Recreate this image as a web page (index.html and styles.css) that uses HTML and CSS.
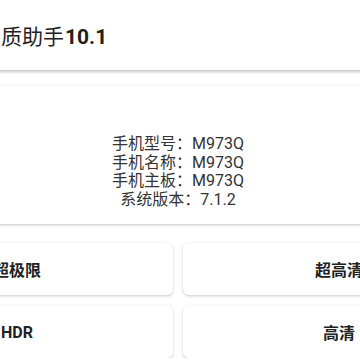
FILE: index.html
```html
<!DOCTYPE html>
<html lang="zh-CN">
<head>
  <meta charset="UTF-8">
  <meta name="viewport" content="width=device-width, initial-scale=1.0">
  <title>画质助手</title>
  <link rel="stylesheet" href="styles.css">
</head>
<body>
  <div class="screen">
    <div class="toolbar">
      <div class="title">画质助手<span class="version">10.1</span></div>
    </div>

    <div class="content">
      <div class="infoCard">
        <div class="infoLine">手机型号：M973Q</div>
        <div class="infoLine">手机名称：M973Q</div>
        <div class="infoLine">手机主板：M973Q</div>
        <div class="infoLine">系统版本：7.1.2</div>
      </div>

      <div class="modeGrid">
        <div class="modeBtn">超极限</div>
        <div class="modeBtn">超高清</div>
        <div class="modeBtn">HDR</div>
        <div class="modeBtn">高清</div>
      </div>
    </div>
  </div>
</body>
</html>
```

FILE: styles.css
```css
body{margin: 0; background: #fff; overflow: hidden; font-family: Roboto, "Noto Sans CJK SC", sans-serif;}

/* the screen is wider than the shot, so it is pulled left */
.screen{width: 650px; margin-left: -147px;}

.toolbar{
  height: 70px;
  display: flex;
  align-items: center;
  padding-left: 127px;
  background: #fff;
  position: relative;
  z-index: 2;
  box-shadow: 0 2px 3px rgba(0,0,0,0.22);
}
.title{font-size: 21px; font-weight: 400; color: #212121;}
.title .version{font-weight: bold; margin-left: 1px;}

.content{padding: 16px 8px 0; display: flex; flex-direction: column; gap: 19px;}

.infoCard{
  box-sizing: border-box;
  height: 138px;
  background: #fff;
  border-radius: 6px;
  box-shadow: 0 1px 3px rgba(0,0,0,0.22);
  display: flex;
  flex-direction: column;
  align-items: center;
  justify-content: flex-end;
  padding-bottom: 15px;
  font-size: 16px;
  line-height: 18.5px;
  color: #333;
}

.modeGrid{display: grid; grid-template-columns: 1fr 1fr; gap: 11px 10px;}
.modeBtn{
  height: 52px;
  background: #fff;
  border-radius: 6px;
  box-shadow: 0 1px 3px rgba(0,0,0,0.22);
  display: flex;
  align-items: center;
  justify-content: center;
  font-size: 16px;
  font-weight: bold;
  color: #222;
}
```
